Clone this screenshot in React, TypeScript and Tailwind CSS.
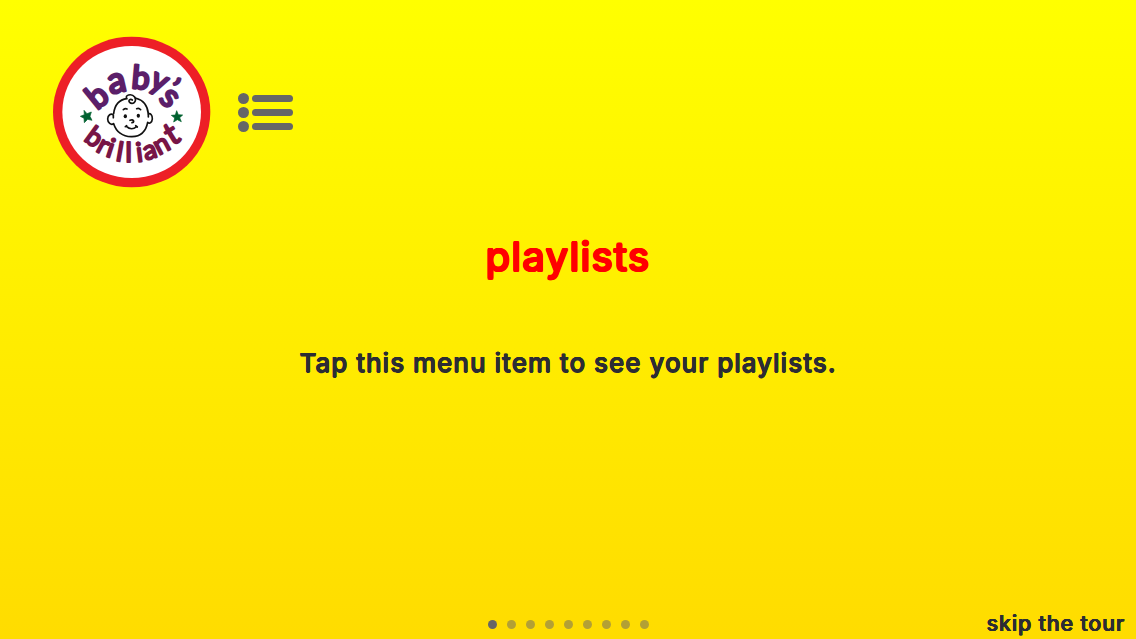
type Glyph = { c: string; x: number; y: number; r: number; s: number };

const topWord: Glyph[] = [
  { c: "b", x: 176, y: 223, r: -39, s: 98 },
  { c: "a", x: 221, y: 186, r: -13, s: 108 },
  { c: "b", x: 284, y: 175, r: 5, s: 96 },
  { c: "y", x: 331, y: 178, r: 25, s: 92 },
  { c: "’", x: 365, y: 196, r: 36, s: 84 },
  { c: "s", x: 353, y: 222, r: 44, s: 98 },
];

const bottomWord: Glyph[] = [
  { c: "b", x: 131, y: 342, r: 36, s: 80 },
  { c: "r", x: 162, y: 368, r: 28, s: 80 },
  { c: "i", x: 188, y: 380, r: 18, s: 80 },
  { c: "l", x: 219, y: 392, r: 10, s: 80 },
  { c: "l", x: 250, y: 395, r: 0, s: 80 },
  { c: "i", x: 285, y: 394, r: -7, s: 80 },
  { c: "a", x: 320, y: 385, r: -17, s: 80 },
  { c: "n", x: 360, y: 365, r: -28, s: 80 },
  { c: "t", x: 395, y: 338, r: -32, s: 96 },
];

function Letters({ glyphs }: { glyphs: Glyph[] }) {
  return (
    <>
      {glyphs.map((g, i) => (
        <text
          key={i}
          textAnchor="middle"
          fontSize={g.s}
          transform={`translate(${g.x} ${g.y}) rotate(${g.r})`}
        >
          {g.c}
        </text>
      ))}
    </>
  );
}

function Logo() {
  return (
    <svg viewBox="23 17 474 456" className="h-[152px] w-[158px] font-['Lato',sans-serif]" role="img" aria-label="baby's brilliant">
      <ellipse cx="259" cy="245" rx="236" ry="226" fill="#ed1f26" />
      <ellipse cx="259" cy="245" rx="208" ry="198" fill="#fff" />
      <g fill="#5b1f69" stroke="#5b1f69" strokeWidth="8" strokeLinejoin="round">
        <Letters glyphs={topWord} />
      </g>
      <g fill="#781546" stroke="#781546" strokeWidth="6" strokeLinejoin="round">
        <Letters glyphs={bottomWord} />
      </g>
      <g fill="#00602f" stroke="#00602f" strokeWidth="2" strokeLinejoin="round">
        <path d="M116 240l9 10 13-5-4 13 6 12-13-3-10 10-1-13-11-6 12-5z" />
        <path d="M394 241l5 12 13 1-9 8 5 12-12-6-11 7 3-12-10-8 12-1z" />
      </g>
      <g fill="none" stroke="#111" strokeWidth="5" strokeLinecap="round" strokeLinejoin="round">
        <path d="M205 250C208 224 223 208 245 205C236 194 259 188 268 200C276 214 261 225 253 216C247 210 255 205 261 209" />
        <path d="M270 203C294 209 307 226 309 251C314 247 322 254 321 266C320 276 313 282 307 276C302 303 287 318 260 319C231 320 212 303 205 280C197 286 187 277 187 266C187 255 197 247 204 254V262" />
        <path d="M309 251V260M234 238Q240 233 245 236M274 235Q281 232 286 238" />
        <path d="M254 270Q262 266 265 272Q265 277 260 277" />
        <path d="M243 288Q258 302 274 289M240 289L244 286M271 286L276 290" />
      </g>
      <ellipse cx="240" cy="258" rx="5" ry="6" fill="#111" />
      <ellipse cx="279" cy="256" rx="5" ry="6" fill="#111" />
    </svg>
  );
}

function PlaylistIcon() {
  return (
    <div className="flex flex-col gap-[3px]">
      {[0, 1, 2].map((i) => (
        <div key={i} className="flex items-center gap-[3px]">
          <span className="size-[11px] rounded-full bg-[#666]" />
          <span className="h-[7px] w-[41px] rounded-full bg-[#666]" />
        </div>
      ))}
    </div>
  );
}

export default function App() {
  return (
    <main className="flex h-[639px] w-[1136px] flex-col overflow-hidden bg-linear-to-b from-[#ffff00] to-[#ffdc00] font-['Inter',sans-serif]">
      <header className="flex h-[188px] shrink-0 items-center gap-[27px] pt-9 pl-[53px]">
        <Logo />
        <PlaylistIcon />
      </header>
      <section className="flex flex-1 flex-col items-center text-center">
        <h1 className="mt-[39px] text-[40px] leading-[60px] font-normal tracking-[1.3px] whitespace-nowrap text-[#ff0000] [text-shadow:1.2px_0_#f00,-1.2px_0_#f00,0_1.2px_#f00,0_-1.2px_#f00,0.85px_0.85px_#f00,-0.85px_0.85px_#f00,0.85px_-0.85px_#f00,-0.85px_-0.85px_#f00]">
          playlists
        </h1>
        <p className="mt-[56px] text-[26px] leading-10 font-medium tracking-[0.98px] whitespace-nowrap text-[#2c2c34] [text-shadow:0.5px_0_#2c2c34,-0.5px_0_#2c2c34,0_0.5px_#2c2c34,0_-0.5px_#2c2c34]">
          Tap this menu item to see your playlists.
        </p>
      </section>
      <footer className="grid h-[34px] shrink-0 grid-cols-[1fr_auto_1fr] items-center">
        <span />
        <nav className="flex gap-[10px] pt-1">
          {Array.from({ length: 9 }, (_, i) => (
            <span key={i} className={i === 0 ? "size-[9px] rounded-full bg-[#666]" : "size-[9px] rounded-full bg-[#b3a035]"} />
          ))}
        </nav>
        <button className="justify-self-end pt-0.5 pr-[11px] text-[21.5px] leading-8 font-medium tracking-[0.8px] whitespace-nowrap text-[#2c2c34] [text-shadow:0.4px_0_#2c2c34,-0.4px_0_#2c2c34,0_0.4px_#2c2c34,0_-0.4px_#2c2c34]">
          skip the tour
        </button>
      </footer>
    </main>
  );
}
